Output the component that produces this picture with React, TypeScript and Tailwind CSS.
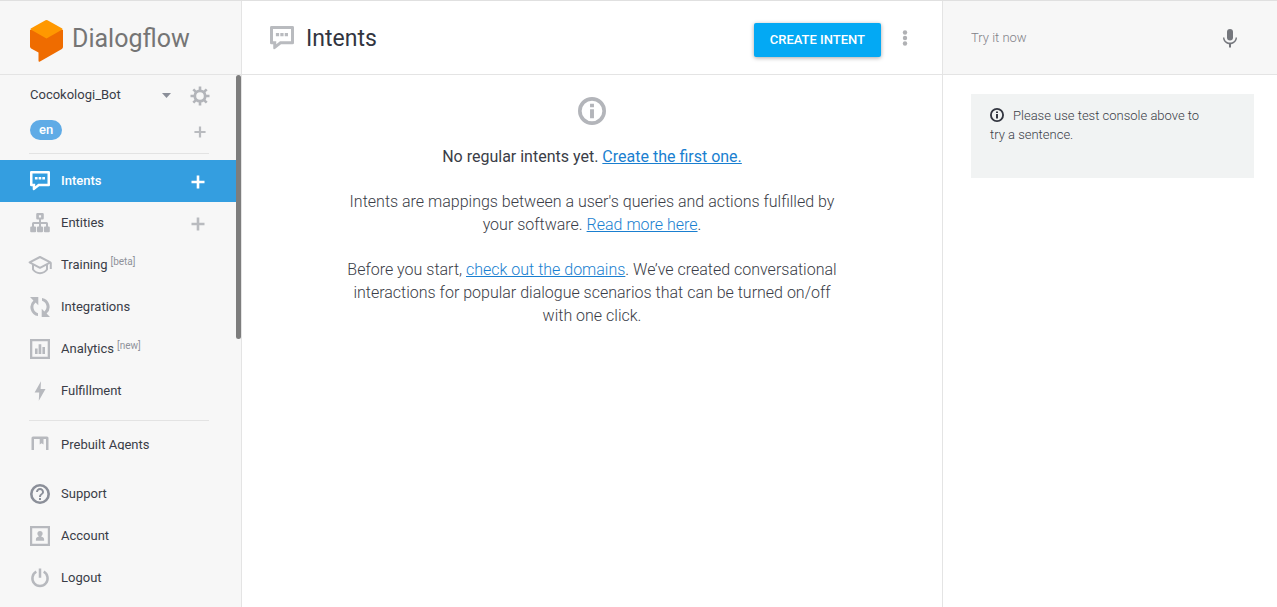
import React, { useState } from "react";

interface NavItem {
  label: string;
  icon: React.ReactNode;
  tag?: string;
  canAdd?: boolean;
}

// Speech bubble used in the menu and in the page title
const IntentIcon = ({ className }: { className?: string }) => (
  <svg className={className} viewBox="0 0 20 20" fill="currentColor">
    <path
      d="M1.2 0h17.6A1.2 1.2 0 0 1 20 1.2v12.9a1.2 1.2 0 0 1-1.2 1.2H9.2L4.4 19c-.8.6-1.7.3-1.7-.7v-3H1.2A1.2 1.2 0 0 1 0 14.1V1.2A1.2 1.2 0 0 1 1.2 0zM2.5 2.5v10.3h2.7v2.4l3.1-2.4h9.2V2.5z"
      fillRule="evenodd"
    />
    <path d="M4.9 5.9h2.7v2.6H4.9zM8.6 5.9h2.7v2.6H8.6zM12.3 5.9H15v2.6h-2.7z" />
  </svg>
);

const InfoIcon = ({ className }: { className?: string }) => (
  <svg className={className} viewBox="0 0 20 20" fill="currentColor">
    <circle cx="10" cy="10" r="8.7" fill="none" stroke="currentColor" strokeWidth="2.6" />
    <path d="M8.6 4.9h2.8v2.4H8.6zM8.6 8.7h2.8v6.4H8.6z" />
  </svg>
);

const PlusIcon = ({ className }: { className?: string }) => (
  <svg className={className} viewBox="0 0 14 14" fill="none" stroke="currentColor" strokeWidth="2.6">
    <path d="M7 .5v13M.5 7h13" />
  </svg>
);

const EntitiesIcon = () => (
  <svg className="size-5" viewBox="0 0 20 20" fill="currentColor">
    <path
      d="M7.5 0h5a1.3 1.3 0 0 1 1.3 1.3v4a1.3 1.3 0 0 1-1.3 1.3H11v2.3h5.5a1.5 1.5 0 0 1 1.5 1.5v3h.8a1 1 0 0 1 1 1v3.8a1 1 0 0 1-1 1h-3.9a1 1 0 0 1-1-1v-3.8a1 1 0 0 1 1-1h1.1v-2.5H11v2.5h1a1 1 0 0 1 1 1v3.8a1 1 0 0 1-1 1H8a1 1 0 0 1-1-1v-3.8a1 1 0 0 1 1-1h1v-2.500H4v2.500h1.100a1 1 0 0 1 1 1v3.800a1 1 0 0 1-1 1H1.200a1 1 0 0 1-1-1v-3.800a1 1 0 0 1 1-1H2v-3a1.500 1.500 0 0 1 1.500-1.500H9V6.600H7.500a1.300 1.300 0 0 1-1.300-1.300v-4A1.300 1.300 0 0 1 7.500 0zM8.900 2.200v2.200h2.200V2.200z"
      fillRule="evenodd"
    />
  </svg>
);

const TrainingIcon = () => (
  <svg className="h-5 w-6" viewBox="0 0 24 20" fill="none" stroke="currentColor" strokeWidth="2" strokeLinejoin="round">
    <path d="M12 2 1.6 7.4 12 12.8l10.4-5.4z" />
    <path d="M5 9.3v5.2c2 2.6 4.4 3.7 7 3.7s5-1.1 7-3.7V9.3M22.8 7.4V14" />
  </svg>
);

const IntegrationsIcon = () => (
  <svg className="size-5" viewBox="0 0 20 20" fill="currentColor">
    <path d="M0 0h8.3v8.3L5.5 5.5A6.3 6.3 0 0 0 8 16.2v2.9A9.1 9.1 0 0 1 3.4 3.4z" />
    <path d="M20 20h-8.3v-8.3l2.8 2.8A6.3 6.3 0 0 0 12 3.8V.9a9.1 9.1 0 0 1 4.6 15.7z" />
  </svg>
);

const AnalyticsIcon = () => (
  <svg className="size-5" viewBox="0 0 20 20" fill="currentColor">
    <path d="M0 0h20v20H0zM2.3 2.3v15.4h15.4V2.3z" fillRule="evenodd" />
    <path d="M5 9.5h2.6V15H5zM8.6 5.3h2.7V15H8.6zM12.4 8H15v7h-2.6z" />
  </svg>
);

const FulfillmentIcon = () => (
  <svg className="size-5" viewBox="0 0 20 20" fill="currentColor">
    <path d="M11 .2 4.6 11.6h4.6l-.4 8.2L15.5 8h-4.9z" />
  </svg>
);

const PrebuiltIcon = () => (
  <svg className="size-5" viewBox="0 0 20 20" fill="currentColor">
    <path
      d="M3 1.5h14A1.5 1.5 0 0 1 18.5 3v14a1.5 1.5 0 0 1-1.5 1.5H3A1.5 1.500 0 0 1 1.500 17V3A1.500 1.500 0 0 1 3 1.500zM4 4v12h12V4z"
      fillRule="evenodd"
    />
    <path d="M9.700 3.500h3.800v6l-1.900-1.300-1.900 1.300z" />
  </svg>
);

const SupportIcon = () => (
  <svg className="size-5 text-[#8b8f99]" viewBox="2 2 20 20" fill="currentColor">
    <circle cx="12" cy="12" r="8.700" fill="none" stroke="currentColor" strokeWidth="2.600" />
    <path d="M11 16h2v2h-2zM12 6c-2.210 0-4 1.790-4 4h2c0-1.100.9-2 2-2s2 .9 2 2c0 2-3 1.750-3 5h2c0-2.250 3-2.500 3-5 0-2.210-1.790-4-4-4z" />
  </svg>
);

const AccountIcon = () => (
  <svg className="size-5" viewBox="0 0 20 20" fill="currentColor">
    <path d="M0 0h20v20H0zM2.200 2.200v15.600h15.600V2.200z" fillRule="evenodd" />
    <circle cx="10" cy="7.600" r="2.600" />
    <path d="M8.800 9h2.400v1.500c1.700.4 2.900 1.400 2.900 2.700v1.500H5.900v-1.500c0-1.300 1.200-2.300 2.900-2.700z" />
  </svg>
);

const LogoutIcon = () => (
  <svg className="size-5" viewBox="0 0 20 20" fill="none" stroke="currentColor" strokeWidth="2.500">
    <path d="M10 .5v9.300M6.300 3.700a7.600 7.600 0 1 0 7.400 0" />
  </svg>
);

const GearIcon = () => (
  <svg className="size-5" viewBox="0 0 20 20" fill="none" stroke="currentColor">
    <circle cx="10" cy="10" r="5.200" strokeWidth="2.800" />
    <path
      d="M10 .5v4M10 15.500v4M.5 10h4M15.500 10h4M3.300 3.300l2.600 2.600M14.100 14.100l2.600 2.600M3.300 16.700l2.600-2.600M14.100 5.900l2.600-2.600"
      strokeWidth="2.600"
    />
  </svg>
);

const mainItems: NavItem[] = [
  { label: "Intents", icon: <IntentIcon className="size-5" />, canAdd: true },
  { label: "Entities", icon: <EntitiesIcon />, canAdd: true },
  { label: "Training", icon: <TrainingIcon />, tag: "[beta]" },
  { label: "Integrations", icon: <IntegrationsIcon /> },
  { label: "Analytics", icon: <AnalyticsIcon />, tag: "[new]" },
  { label: "Fulfillment", icon: <FulfillmentIcon /> },
];

const footerItems: NavItem[] = [
  { label: "Support", icon: <SupportIcon /> },
  { label: "Account", icon: <AccountIcon /> },
  { label: "Logout", icon: <LogoutIcon /> },
];

const NavRow = ({
  item,
  active = false,
  onSelect,
}: {
  item: NavItem;
  active?: boolean;
  onSelect?: () => void;
}) => (
  <li
    className={`flex h-[42px] items-center pr-9 pl-[27px] ${
      active ? "bg-[#349ee0] font-medium text-white" : "text-[#3a3d47]"
    }`}
  >
    <a href="#" onClick={onSelect} className="flex flex-1 items-center gap-[9px]">
      <span className={`flex w-[25px] justify-center ${active ? "text-white" : "text-[#b7b9be]"}`}>
        {item.icon}
      </span>
      <span>
        {item.label}
        {item.tag && (
          <span className="ml-[3px] align-[4px] text-[10px] leading-none text-[#8f929a]">{item.tag}</span>
        )}
      </span>
    </a>
    {item.canAdd && (
      <button aria-label={`Create ${item.label}`} className={active ? "pt-[2px] text-white" : "pt-[2px] text-[#b9bbbf]"}>
        <PlusIcon className="size-[14px]" />
      </button>
    )}
  </li>
);

const Sidebar = () => {
  const [selected, setSelected] = useState("Intents");

  return (
    <aside className="flex w-[242px] shrink-0 flex-col border-r border-[#e4e4e4] bg-[#f7f7f7] text-[13px]">
      {/* Logo */}
      <div className="flex h-[74px] shrink-0 items-center gap-2 border-b border-[#e4e4e4] pt-[6px] pl-[29px]">
        <svg className="h-[43px] w-[35px]" viewBox="0 0 35 43">
          <path d="M1 11 17.500 9.500 34 11v17q0 1.300-1.100 1.900L11 42.600q-1.500.7-1.500-1v-8L2.100 29.400Q1 28.800 1 27.500z" fill="#ef6c00" />
          <path d="M1.200 10.300Q1.500 9.600 2.200 9.200L16.500 1.200q1-.5 2 0L32.800 9.200q.7.400 1 1.100L17.500 19.500z" fill="#ff9800" />
        </svg>
        <span className="pb-1 text-[25px] leading-8 text-[#757575]">Dialogflow</span>
      </div>

      <div className="relative min-h-0 flex-1 overflow-hidden">
        <div className="flex h-10 items-center pr-[35px] pl-[30px]">
          <div className="relative flex-1">
            <select
              aria-label="Agent"
              className="w-[144px] appearance-none bg-transparent text-[#3a3d47] outline-none"
            >
              <option>Cocokologi_Bot</option>
            </select>
            <svg className="pointer-events-none absolute top-2 left-[132px] h-[5px] w-[9px] text-[#8b8f99]" viewBox="0 0 9 5" fill="currentColor">
              <path d="M0 0h9L4.500 5z" />
            </svg>
          </div>
          <button aria-label="Agent settings" className="-mr-1 pt-[2px] text-[#b3b5ba]">
            <GearIcon />
          </button>
        </div>

        <div className="flex h-[30px] items-center justify-between pr-[35px] pl-[30px]">
          <button className="h-5 rounded-full bg-[#5fabe6] px-[9px] leading-5 font-medium text-white">en</button>
          <button aria-label="Add language" className="pt-1 text-[#b9bbbf]">
            <PlusIcon className="size-3" />
          </button>
        </div>

        <hr className="mt-2 mr-8 mb-[6px] ml-[29px] border-[#e3e3e3]" />

        <ul>
          {mainItems.map((item) => (
            <NavRow
              key={item.label}
              item={item}
              active={selected === item.label}
              onSelect={() => setSelected(item.label)}
            />
          ))}
        </ul>

        <hr className="mt-2 mr-8 mb-[3px] ml-[29px] border-[#e3e3e3]" />

        <ul>
          <NavRow item={{ label: "Prebuilt Agents", icon: <PrebuiltIcon /> }} />
        </ul>

        {/* Scrollbar thumb */}
        <div className="absolute top-0 right-0 h-[264px] w-[5px] rounded-full bg-[#7d7d7d]" />
      </div>

      <ul className="shrink-0 pt-[23px] pb-2">
        {footerItems.map((item) => (
          <NavRow key={item.label} item={item} />
        ))}
      </ul>
    </aside>
  );
};

const Content = () => (
  <main className="min-w-0 flex-1">
    <header className="flex h-[74px] items-center border-b border-[#e4e4e4] pr-[25px] pl-7">
      <IntentIcon className="size-6 text-[#b9bbbf]" />
      <h1 className="ml-3 flex-1 pt-[2px] text-[23px] leading-8 text-[#32353f]">Intents</h1>
      <button className="mt-1 h-[34px] rounded-[2px] bg-[#03a9f4] px-4 text-[13px] font-medium text-white shadow-[0_1px_4px_rgba(0,0,0,0.35)]">
        CREATE INTENT
      </button>
      <button aria-label="More options" className="ml-3 text-[#b0b1b4]">
        <svg className="size-6" viewBox="0 0 24 24" fill="currentColor">
          <circle cx="12" cy="6.500" r="2.200" />
          <circle cx="12" cy="12" r="2.200" />
          <circle cx="12" cy="17.500" r="2.200" />
        </svg>
      </button>
    </header>

    <section className="mx-auto flex max-w-[500px] flex-col items-center gap-[22px] pt-[22px] text-center text-base leading-[23px] font-light text-[#3a3d47]">
      <InfoIcon className="-mb-[2px] size-7 text-[#b3b5ba]" />
      <p className="font-normal">
        No regular intents yet.{" "}
        <a href="#" className="text-[#1a7fd0] underline">
          Create the first one.
        </a>
      </p>
      <p>
        Intents are mappings between a user's queries and actions fulfilled by your software.{" "}
        <a href="#" className="text-[#1a7fd0] underline">
          Read more here
        </a>
        .
      </p>
      <p>
        Before you start,{" "}
        <a href="#" className="text-[#1a7fd0] underline">
          check out the domains
        </a>
        . We’ve created conversational interactions for popular dialogue scenarios that can be turned on/off with one
        click.
      </p>
    </section>
  </main>
);

const TestConsole = () => {
  const [query, setQuery] = useState("");

  return (
    <aside className="w-[335px] shrink-0 border-l border-[#e4e4e4]">
      <div className="flex h-[74px] items-center border-b border-[#e4e4e4] bg-[#f7f7f7] pr-[35px] pl-7">
        <input
          type="text"
          aria-label="Try it now"
          placeholder="Try it now"
          value={query}
          onChange={(e) => setQuery(e.target.value)}
          className="min-w-0 flex-1 bg-transparent text-[13px] font-light text-[#3a3d47] outline-none placeholder:text-[#7f8187]"
        />
        <button aria-label="Speak" className="text-[#75777d]">
          <svg className="size-6" viewBox="0 0 24 24" fill="currentColor">
            <path d="M12 14.500a3 3 0 0 0 3-3V6a3 3 0 0 0-6 0v5.500a3 3 0 0 0 3 3z" />
            <path d="M17.600 11.500c0 3-2.700 5-5.600 5s-5.600-2-5.600-5H5c0 3.400 2.700 6.200 6 6.700V21.500h2v-3.300c3.300-.5 6-3.300 6-6.700z" />
          </svg>
        </button>
      </div>

      <div className="mt-[19px] mr-[23px] ml-7 min-h-[84px] bg-[#f1f3f3] py-3 pr-12 pl-[19px] text-[13px] leading-[19px] font-light text-[#3a3d47]">
        <InfoIcon className="mr-[9px] inline size-[14px] align-[-2px] text-[#32353f]" />
        Please use test console above to try a sentence.
      </div>
    </aside>
  );
};

export default function App() {
  return (
    <div className="flex h-screen border-t border-[#e0e0e0] bg-white font-['Roboto','Liberation_Sans',sans-serif]">
      <Sidebar />
      <Content />
      <TestConsole />
    </div>
  );
}
